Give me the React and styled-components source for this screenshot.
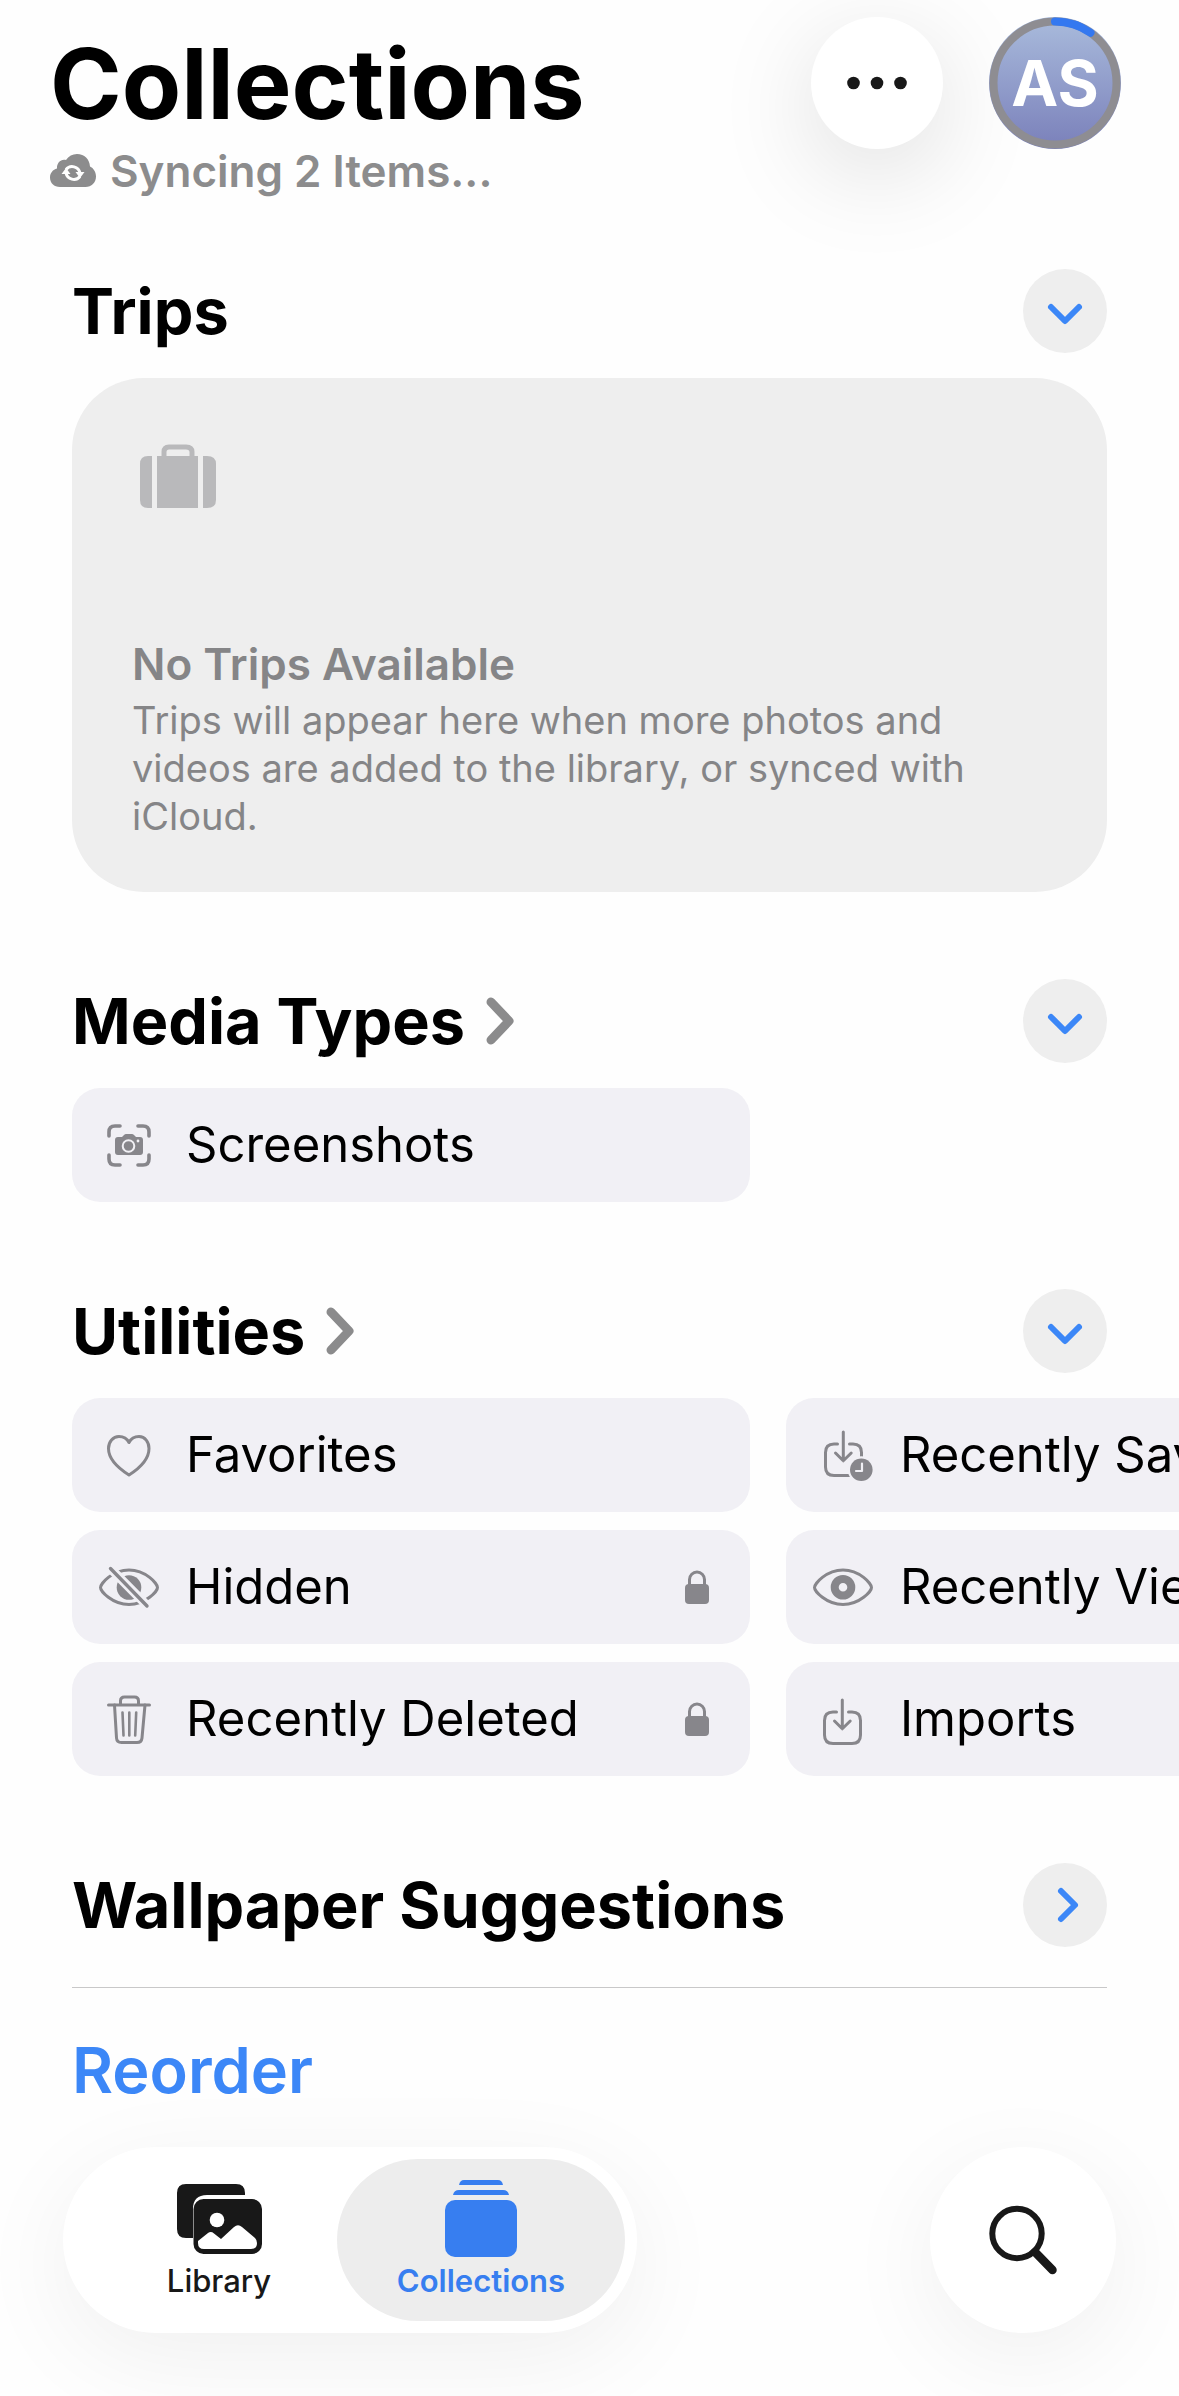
import React from 'react';
import styled, { createGlobalStyle } from 'styled-components';

const COLORS = {
  text: '#000',
  ink: '#181818',
  gray: '#8c8c8d',
  icon: '#87868b',
  blue: '#3c87f7',
  tabBlue: '#377ef0',
  fill: '#eeeeee',
  tile: '#f1f0f5',
  line: '#c8c8c9',
};

const GUTTER = 72;

/* Icons */

const CloudSyncIcon = () => (
  <svg width="46" height="34" viewBox="0 0 46 34" aria-hidden="true">
    <path
      d="M10 33C4 33 0 29 0 23.500C0 19 3 15.500 7 14.500C6.500 9 11 4.500 16 6C18.500 2 22.500 0 27 0C34.500 0 39.500 5 40 12.500C43.500 14 46 18 46 22.500C46 28.500 41.500 33 35.500 33Z"
      fill={COLORS.gray}
    />
    <g fill="none" stroke="#fff" strokeWidth="3">
      <path d="M16 15.500A8 8 0 0 1 30 19" />
      <path d="M30 22.500A8 8 0 0 1 16 19" />
    </g>
    <path d="M25.500 18h9l-4.500 6zM20.500 20h-9l4.500-6z" fill="#fff" />
  </svg>
);

const EllipsisIcon = () => (
  <svg width="60" height="14" viewBox="0 0 60 14" aria-hidden="true">
    <g fill={COLORS.ink}>
      <circle cx="6.500" cy="7" r="6.300" />
      <circle cx="30" cy="7" r="6.300" />
      <circle cx="53.500" cy="7" r="6.300" />
    </g>
  </svg>
);

const ProgressRing = () => (
  <svg viewBox="0 0 132 132" aria-hidden="true">
    <g fill="none" strokeWidth="8">
      <circle cx="66" cy="66" r="61.500" stroke="#8e8d92" />
      <path
        d="M66 4.500A61.500 61.500 0 0 1 101.500 15.800"
        stroke="#3478f0"
        strokeLinecap="round"
      />
    </g>
  </svg>
);

const ChevronIcon = ({ right = false }) => (
  <svg width="44" height="44" viewBox="0 0 44 44" aria-hidden="true">
    <path
      d={right ? 'M18 8L32 22L18 36' : 'M8 18L22 32L36 18'}
      fill="none"
      stroke={COLORS.blue}
      strokeWidth="6"
      strokeLinecap="round"
      strokeLinejoin="round"
    />
  </svg>
);

const TitleChevronIcon = () => (
  <svg width="30" height="64" viewBox="0 0 30 64" aria-hidden="true">
    <path
      d="M6 13L24 32L6 51"
      fill="none"
      stroke="#8b8b8c"
      strokeWidth="9"
      strokeLinecap="round"
      strokeLinejoin="round"
    />
  </svg>
);

const SuitcaseIcon = () => (
  <svg width="88" height="66" viewBox="-3 0 88 66" aria-hidden="true">
    <g fill="#b9b9bb">
      <path d="M22 12h41v52H22z" />
      <path d="M17 12v52h-4q-8 0-8-8V20q0-8 8-8z" />
      <path d="M68 12v52h4q9 0 9-8V20q0-8-9-8z" />
    </g>
    <path
      d="M29 14V8q0-5 5-5H51q6 0 6 5v6"
      fill="none"
      stroke="#b9b9bb"
      strokeWidth="5"
    />
  </svg>
);

const TileSvg = ({ children }) => (
  <svg
    width="62"
    height="60"
    viewBox="0 0 62 60"
    fill="none"
    stroke={COLORS.icon}
    strokeWidth="3"
    strokeLinecap="round"
    strokeLinejoin="round"
    aria-hidden="true"
  >
    {children}
  </svg>
);

const ScreenshotIcon = () => (
  <TileSvg>
    <g strokeWidth="3.600">
      <path d="M11 21V17q0-6 6-6h5M40 11h5q6 0 6 6v4M51 40v4q0 6-6 6h-5M22 50h-5q-6 0-6-6v-4" />
    </g>
    <path
      d="M20 22h4l2-2q1-1 2-1h6q1 0 2 1l2 2h4q3 0 3 3v12q0 3-3 3H20q-3 0-3-3V25q0-3 3-3z"
      fill={COLORS.icon}
      stroke="none"
    />
    <circle cx="30.500" cy="31" r="5.800" stroke={COLORS.tile} strokeWidth="2" />
    <circle cx="40" cy="26" r="1.400" fill={COLORS.tile} stroke="none" />
  </TileSvg>
);

const HeartIcon = () => (
  <TileSvg>
    <path d="M31 17.500C29 13.500 25 11.500 21 11.500C15 11.500 10.500 17 10.500 23.500C10.500 34 20 43 31 50C42 43 51 34 51 23.500C51 17 47 11.500 41 11.500C37 11.500 33 13.500 31 17.500Z" />
  </TileSvg>
);

const EYE_PATH =
  'M2.500 30.500C2.500 27 14 13 31 13C48 13 59.500 27 59.500 30.500C59.500 34 48 47.500 31 47.500C14 47.500 2.500 34 2.500 30.500Z';

const EyeSlashIcon = () => (
  <TileSvg>
    <path d={EYE_PATH} />
    <circle cx="31" cy="30.500" r="12.300" fill={COLORS.icon} stroke="none" />
    <path d="M12 11L49.500 49" stroke={COLORS.tile} strokeWidth="9" />
    <path d="M12.500 11.500L49 49" strokeWidth="3.400" />
  </TileSvg>
);

const EyeIcon = () => (
  <TileSvg>
    <path d={EYE_PATH} />
    <circle cx="31" cy="30.300" r="8.300" strokeWidth="8" />
  </TileSvg>
);

const TrashIcon = () => (
  <TileSvg>
    <path d="M10.500 16H51.500M22.500 15V12q0-4 4-4h10q4 0 4 4v3" />
    <path d="M16.500 16L18.500 49q.3 4.500 5 4.500h15.500q4.500 0 5-4.500L47 16" />
    <path
      d="M24.500 23.500L25.500 46.500M31.300 23.500V46.500M38.200 23.500L37.200 46.500"
      strokeWidth="2.600"
    />
  </TileSvg>
);

const TrayArrow = () => (
  <path d="M25.500 19H22q-8.500 0-8.500 8.500V42q0 8.500 8.500 8.500H41q8.500 0 8.500-8.500V27.500q0-8.500-8.500-8.500h-3.500M31.300 7V35.500M23.500 28L31.300 35.800L39.200 28" />
);

const SavedIcon = () => (
  <TileSvg>
    <TrayArrow />
    <circle cx="49.300" cy="44.700" r="13.500" fill={COLORS.tile} stroke="none" />
    <circle cx="49.300" cy="44.700" r="11.300" fill={COLORS.icon} stroke="none" />
    <path d="M50 38.500V46H44" stroke={COLORS.tile} strokeWidth="2.200" />
  </TileSvg>
);

const ImportIcon = () => (
  <TileSvg>
    <g transform="translate(-1 4)">
      <TrayArrow />
    </g>
  </TileSvg>
);

const LockIcon = () => (
  <svg width="24" height="34" viewBox="0 0 24 34" role="img" aria-label="Locked">
    <rect y="14" width="24" height="20" rx="4" fill={COLORS.icon} />
    <path
      d="M4.500 16V9.500a7.500 7.500 0 0 1 15 0V16"
      fill="none"
      stroke={COLORS.icon}
      strokeWidth="3"
    />
  </svg>
);

const LibraryIcon = () => (
  <svg width="88" height="80" viewBox="0 0 88 80" aria-hidden="true">
    <path
      d="M10 4H61q9 0 9 9v2H32q-14 0-14 14V58H11q-9 0-9-9V13q0-9 9-9z"
      fill={COLORS.ink}
    />
    <rect x="18.500" y="19" width="68.500" height="55" rx="10" fill={COLORS.ink} />
    <circle cx="42" cy="40" r="7.300" fill="#fff" />
    <path
      d="M23 61L33 53Q36 51 39 53.500L46 59L59 47Q63 43.500 67 47L80 58Q82 60 82 63Q82 69 76 69H29Q23 69 23 63Z"
      fill="#fff"
    />
  </svg>
);

const CollectionsIcon = () => (
  <svg width="80" height="80" viewBox="0 0 80 80" aria-hidden="true">
    <g fill={COLORS.tabBlue}>
      <path d="M18 5q1-5 5-5H57q4 0 5 5z" />
      <path d="M12 15q1-5 6-5H62q5 0 6 5z" />
      <rect x="4" y="20" width="72" height="57" rx="10" />
    </g>
  </svg>
);

const SearchIcon = () => (
  <svg width="74" height="74" viewBox="0 0 74 74" aria-hidden="true">
    <g fill="none" stroke={COLORS.ink}>
      <circle cx="31" cy="30.500" r="24.700" strokeWidth="6" />
      <path d="M49 49L66.500 67" strokeWidth="8.500" strokeLinecap="round" />
    </g>
  </svg>
);

/* Data */

const MEDIA_TYPES = [{ label: 'Screenshots', Icon: ScreenshotIcon }];

const UTILITIES = [
  { label: 'Favorites', Icon: HeartIcon },
  { label: 'Hidden', Icon: EyeSlashIcon, locked: true },
  { label: 'Recently Deleted', Icon: TrashIcon, locked: true },
  { label: 'Recently Saved', Icon: SavedIcon },
  { label: 'Recently Viewed', Icon: EyeIcon },
  { label: 'Imports', Icon: ImportIcon },
];

const SectionHeader = ({ title, href, collapsed = false }) => (
  <SectionBar>
    <SectionTitle>
      {href ? (
        <TitleLink href={href}>
          {title}
          <TitleChevronIcon />
        </TitleLink>
      ) : (
        title
      )}
    </SectionTitle>
    <ToggleButton type="button" aria-label={title} aria-expanded={!collapsed}>
      <ChevronIcon right={collapsed} />
    </ToggleButton>
  </SectionBar>
);

const Tiles = ({ items, rows }) => (
  <TileGrid $rows={rows}>
    {items.map(({ label, Icon, locked }) => (
      <Tile key={label} type="button">
        <Icon />
        <TileLabel>{label}</TileLabel>
        {locked && <LockIcon />}
      </Tile>
    ))}
  </TileGrid>
);

const App = () => (
  <Page>
    <GlobalStyle />

    <Header>
      <div>
        <Title>Collections</Title>
        <SyncStatus>
          <CloudSyncIcon />
          Syncing 2 Items...
        </SyncStatus>
      </div>
      <Actions>
        <RoundButton type="button" aria-label="More" $size={132} $shadow={0.13}>
          <EllipsisIcon />
        </RoundButton>
        <Avatar type="button">
          <ProgressRing />
          <Initials>AS</Initials>
        </Avatar>
      </Actions>
    </Header>

    <Main>
      <section>
        <SectionHeader title="Trips" />
        <EmptyCard>
          <SuitcaseIcon />
          <div>
            <EmptyTitle>No Trips Available</EmptyTitle>
            <EmptyText>
              Trips will appear here when more photos and videos are added to
              the library, or synced with iCloud.
            </EmptyText>
          </div>
        </EmptyCard>
      </section>

      <section>
        <SectionHeader title="Media Types" href="#media-types" />
        <Tiles items={MEDIA_TYPES} rows={1} />
      </section>

      <section>
        <SectionHeader title="Utilities" href="#utilities" />
        <Tiles items={UTILITIES} rows={3} />
      </section>

      <section>
        <SectionHeader title="Wallpaper Suggestions" collapsed />
        <Divider />
        <ReorderButton type="button">Reorder</ReorderButton>
      </section>
    </Main>

    <BottomBar>
      <Tabs>
        <Tab href="#library">
          <LibraryIcon />
          Library
        </Tab>
        <Tab href="#collections" aria-current="page" $active>
          <CollectionsIcon />
          Collections
        </Tab>
      </Tabs>
      <RoundButton type="button" aria-label="Search" $size={186} $shadow={0.06}>
        <SearchIcon />
      </RoundButton>
    </BottomBar>
  </Page>
);

/* Styles */

const GlobalStyle = createGlobalStyle`
  * {
    box-sizing: border-box;
  }

  body {
    margin: 0;
    background: #fefefe;
    color: ${COLORS.text};
    font-family: Inter, 'Liberation Sans', sans-serif;
  }

  h1, h2, h3, p {
    margin: 0;
  }

  button {
    padding: 0;
    border: none;
    color: inherit;
    font: inherit;
    cursor: pointer;
  }

  a {
    color: inherit;
    text-decoration: none;
  }

  svg {
    display: block;
    flex-shrink: 0;
  }
`;

const Page = styled.div`
  display: flex;
  flex-direction: column;
  min-height: 100vh;
  overflow: hidden;
`;

const Header = styled.header`
  display: flex;
  justify-content: space-between;
  align-items: flex-start;
  padding: 17px 58px 78px 50px;
`;

const Title = styled.h1`
  font-size: 97px;
  font-weight: 700;
  line-height: 134px;
`;

const SyncStatus = styled.p`
  display: flex;
  align-items: center;
  gap: 14px;
  color: ${COLORS.gray};
  font-size: 44px;
  font-weight: 600;
  line-height: 40px;
`;

const Actions = styled.div`
  display: flex;
  gap: 46px;
`;

const RoundButton = styled.button`
  display: flex;
  justify-content: center;
  align-items: center;
  width: ${(props) => props.$size}px;
  height: ${(props) => props.$size}px;
  border-radius: 50%;
  background: #fff;
  box-shadow: 0 24px 100px rgba(0, 0, 0, ${(props) => props.$shadow});
`;

const Avatar = styled.button`
  display: grid;
  place-items: center;
  width: 132px;
  height: 132px;
  border-radius: 50%;
  background: linear-gradient(#a9bbdc, #7a80ba);
  color: #fff;

  > * {
    grid-area: 1 / 1;
  }
`;

const Initials = styled.span`
  font-size: 63px;
  font-weight: 700;
  line-height: 64px;
`;

const Main = styled.main`
  display: flex;
  flex-direction: column;
  gap: 87px;
`;

const SectionBar = styled.div`
  display: flex;
  justify-content: space-between;
  align-items: center;
  padding: 0 ${GUTTER}px;
`;

const SectionTitle = styled.h2`
  font-size: 63px;
  font-weight: 700;
  line-height: 84px;
`;

const TitleLink = styled.a`
  display: flex;
  align-items: center;
  gap: 20px;
`;

const ToggleButton = styled.button`
  display: flex;
  justify-content: center;
  align-items: center;
  width: 84px;
  height: 84px;
  border-radius: 50%;
  background: ${COLORS.fill};
`;

const EmptyCard = styled.div`
  display: flex;
  flex-direction: column;
  justify-content: space-between;
  min-height: 514px;
  margin: 25px ${GUTTER}px 0;
  padding: 66px 60px 52px;
  border-radius: 72px;
  background: ${COLORS.fill};
  color: #858587;
`;

const EmptyTitle = styled.h3`
  margin-bottom: 6px;
  font-size: 44px;
  font-weight: 600;
  line-height: 52px;
`;

const EmptyText = styled.p`
  font-size: 38px;
  line-height: 48px;
`;

const TileGrid = styled.div`
  display: grid;
  grid-template-rows: repeat(${(props) => props.$rows}, 114px);
  grid-auto-flow: column;
  grid-auto-columns: 65.5%;
  gap: 18px 36px;
  margin-top: 25px;
  padding: 0 ${GUTTER}px;
  overflow-x: auto;
  scrollbar-width: none;
`;

const Tile = styled.button`
  display: flex;
  align-items: center;
  gap: 26px;
  padding: 0 41px 0 26px;
  border-radius: 28px;
  background: ${COLORS.tile};
  text-align: left;
`;

const TileLabel = styled.span`
  flex: 1;
  font-size: 49px;
  line-height: 60px;
  white-space: nowrap;
`;

const Divider = styled.hr`
  margin: 40px ${GUTTER}px 42px;
  border: none;
  border-top: 1px solid ${COLORS.line};
`;

const ReorderButton = styled.button`
  margin: 0 ${GUTTER}px;
  background: none;
  color: ${COLORS.blue};
  font-size: 63px;
  font-weight: 600;
  line-height: 80px;
`;

const BottomBar = styled.div`
  position: sticky;
  bottom: 0;
  display: flex;
  justify-content: space-between;
  margin-top: auto;
  padding: 0 63px 63px;
`;

const Tabs = styled.nav`
  display: flex;
  padding: 12px;
  border-radius: 93px;
  background: #fff;
  box-shadow: 0 24px 100px rgba(0, 0, 0, 0.06);
`;

const Tab = styled.a`
  display: flex;
  flex-direction: column;
  align-items: center;
  width: 288px;
  height: 162px;
  margin-right: ${(props) => (props.$active ? 0 : '-26px')};
  padding-top: 21px;
  border-radius: 81px;
  background: ${(props) => (props.$active ? '#ededed' : 'none')};
  color: ${(props) => (props.$active ? COLORS.tabBlue : COLORS.ink)};
  font-size: 31px;
  font-weight: ${(props) => (props.$active ? 600 : 500)};
  line-height: 42px;
`;

export default App;
